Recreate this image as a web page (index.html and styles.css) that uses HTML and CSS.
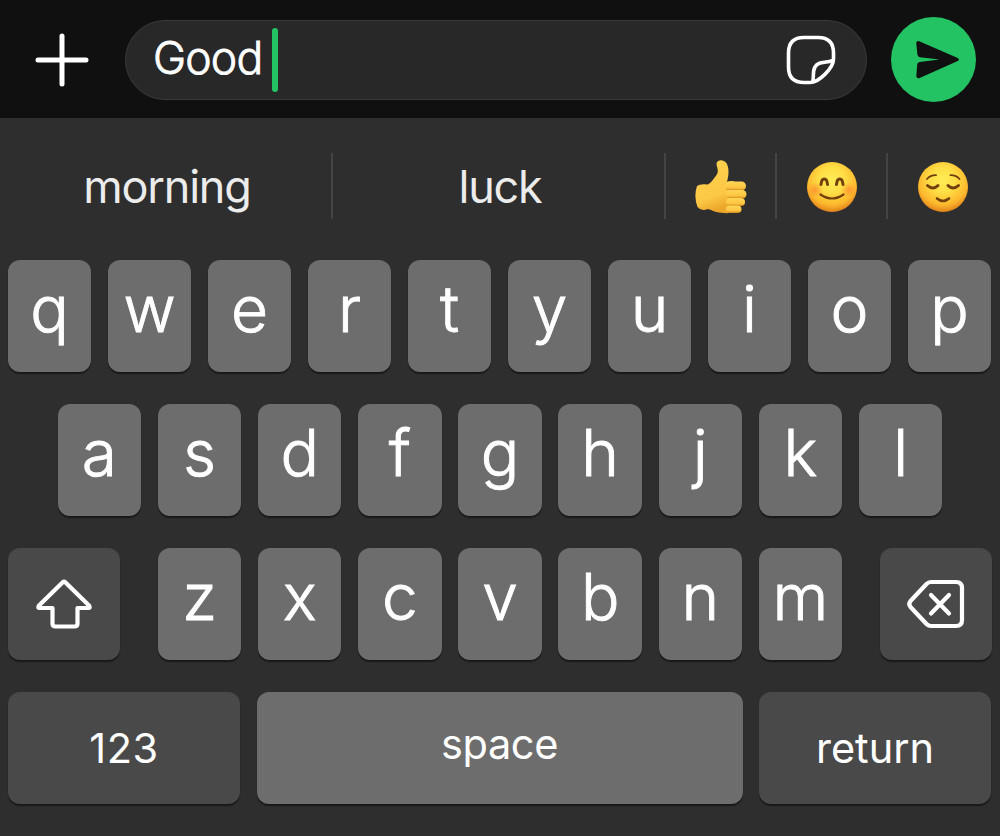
FILE: index.html
```html
<!DOCTYPE html>
<html lang="en">
<head>
<meta charset="utf-8">
<title>Message keyboard</title>
<link rel="stylesheet" href="styles.css">
</head>
<body>
<header class="composer">
  <svg class="plus" viewBox="0 0 54 54"><path d="M27 3v48M3 27h48"/></svg>
  <div class="field">
    <span class="typed">Good</span><span class="caret"></span>
    <svg class="sticker" viewBox="0 0 50 50"><path d="M18 2.500H32Q47.500 2.500 47.500 18V24C47.500 33 33 47.500 24 47.500H18Q2.500 47.500 2.500 32V18Q2.500 2.500 18 2.500ZM26.500 47C28.500 42 26 37 29 32C32 26 39 28.500 47 25.500"/></svg>
  </div>
  <div class="send"><svg viewBox="0 0 86 86"><path d="M25.500 26Q26 23.800 28.500 24.500L67 41.200Q70.500 43 67 44.800L29 61.700Q26 62.500 25.600 60L26.500 48Q26.700 45.700 29 45.500L49 43L29 40.700Q27 40.300 26.700 38Z"/></svg></div>
</header>
<main class="keyboard">
  <div class="suggestions">
    <div class="word">morning</div>
    <div class="word">luck</div>
    <div class="emoji">
      <svg viewBox="0 0 54 58">
        <defs>
          <linearGradient id="hand" x1="0" y1="0" x2="0.3" y2="1"><stop offset="0" stop-color="#ffd24e"/><stop offset=".75" stop-color="#fcc845"/><stop offset="1" stop-color="#eca62a"/></linearGradient>
          <linearGradient id="finger" x1="0" y1="0" x2="0" y2="1"><stop offset="0" stop-color="#ffd557"/><stop offset=".7" stop-color="#fcc540"/><stop offset="1" stop-color="#d0851a"/></linearGradient>
        </defs>
        <path fill="url(#hand)" d="M3 29Q6 26.500 14 27.500C18 25 20 21 22.500 18C25.500 14 22.500 10 22.500 6.500C23 2.500 30 1.500 33 7C35.500 13 34.500 19 33 25Q38 23 41 25L43 51Q40 57 30 56C22 56 18 53 14 52Q7 54.500 3.500 50Q-.5 39 3 29Z"/>
        <g fill="url(#finger)"><rect x="31" y="24.500" width="21" height="9" rx="4.500"/><rect x="32" y="33" width="20.500" height="8.500" rx="4.200"/><rect x="32" y="41" width="19" height="8" rx="4"/><rect x="32" y="48.500" width="15.500" height="7.500" rx="3.700"/></g>
      </svg>
    </div>
    <div class="emoji">
      <svg viewBox="0 0 54 58">
        <defs>
          <radialGradient id="face" cx=".5" cy=".36" r=".66"><stop offset="0" stop-color="#ffed55"/><stop offset=".4" stop-color="#ffdd45"/><stop offset=".75" stop-color="#fdb82d"/><stop offset="1" stop-color="#dd7a18"/></radialGradient>
          <radialGradient id="cheek"><stop offset="0" stop-color="#fb7c2c" stop-opacity=".65"/><stop offset="1" stop-color="#fa8a33" stop-opacity="0"/></radialGradient>
        </defs>
        <circle cx="27" cy="30" r="25" fill="url(#face)"/>
        <circle cx="10" cy="33" r="8" fill="url(#cheek)"/><circle cx="44" cy="33" r="8" fill="url(#cheek)"/>
        <g class="features"><path d="M16 27.500C16.500 20 22 20 22.500 27.500M31.500 27.500C32 20 37.500 20 38 27.500" stroke-width="3"/><path d="M15.500 37.500Q27 45.500 38.500 37.500" stroke-width="2.200"/></g>
      </svg>
    </div>
    <div class="emoji">
      <svg viewBox="0 0 54 58">
        <circle cx="27" cy="30" r="25" fill="url(#face)"/>
        <g class="features"><path d="M11.500 28.500Q17 33.500 22 28.500M32 28.500Q37 33.500 42.500 28.500" stroke-width="3"/><path d="M11 22Q14.500 18 20 18.200M34.500 18.200Q40 18 43.500 22" stroke-width="1.800"/><path d="M21 41.500Q27 46.500 33 41.500" stroke-width="2.600"/></g>
      </svg>
    </div>
  </div>
  <div class="row top">
    <div class="key">q</div><div class="key">w</div><div class="key">e</div><div class="key">r</div><div class="key">t</div><div class="key">y</div><div class="key">u</div><div class="key">i</div><div class="key">o</div><div class="key">p</div>
  </div>
  <div class="row">
    <div class="key">a</div><div class="key">s</div><div class="key">d</div><div class="key">f</div><div class="key">g</div><div class="key">h</div><div class="key">j</div><div class="key">k</div><div class="key">l</div>
  </div>
  <div class="row spread">
    <div class="key dark square"><svg viewBox="0 0 60 52"><path d="M28.500 4.500Q30 3 31.500 4.500L55 27.500Q57 30 54 30H43.500V45.500Q43.500 48.500 40.500 48.500H21.500Q18.500 48.500 18.500 45.500V30H6Q3 30 5 27.500Z"/></svg></div>
    <div class="letters">
      <div class="key">z</div><div class="key">x</div><div class="key">c</div><div class="key">v</div><div class="key">b</div><div class="key">n</div><div class="key">m</div>
    </div>
    <div class="key dark square"><svg viewBox="0 0 60 52"><path d="M25 4H50Q56 4 56 10V42Q56 48 50 48H25Q22.500 48 20.500 46L4.500 29Q2 26 4.500 23L20.500 6Q22.500 4 25 4ZM25 17L43 35.500M43 17L25 35.500"/></svg></div>
  </div>
  <div class="row spread bottom">
    <div class="key dark wide low digits">123</div>
    <div class="key space">space</div>
    <div class="key dark wide low">return</div>
  </div>
</main>
</body>
</html>
```
FILE: styles.css
```css
* { box-sizing: border-box; }
body {
  margin: 0;
  width: 1000px;
  height: 836px;
  overflow: hidden;
  background: #2e2e2e;
  color: #fff;
  font-family: Inter, "Liberation Sans", sans-serif;
}
svg { display: block; overflow: visible; }

.composer {
  display: flex;
  align-items: center;
  height: 118px;
  padding: 1px 24px 0 35px;
  background: #101010;
}
.plus { width: 54px; height: 54px; fill: none; stroke: #fff; stroke-width: 5; stroke-linecap: round; }
.field {
  display: flex;
  align-items: center;
  width: 742px;
  height: 80px;
  margin: 0 24px 0 36px;
  padding: 0 30px 0 26px;
  border: 1px solid #3a3a3a;
  border-radius: 40px;
  background: #282828;
}
.typed {
  width: 109px;
  padding: 0 0 3px 1px;
  font-size: 44.500px;
  font-weight: 300;
  line-height: 60px;
  letter-spacing: -0.8px;
  -webkit-text-stroke: 0.8px #fff;
}
.caret { width: 6px; height: 64px; margin-left: 11px; border-radius: 3px; background: #23c363; }
.sticker { width: 50px; height: 50px; margin-left: auto; fill: none; stroke: #fff; stroke-width: 3.6; stroke-linejoin: round; }
.send { width: 85px; height: 85px; flex: none; border-radius: 50%; background: #23c363; }
.send svg { width: 85px; height: 85px; fill: #101010; }

.keyboard { display: flex; flex-direction: column; gap: 32px; }
.suggestions {
  display: grid;
  grid-template-columns: 333px 333px 111px 111px 112px;
  height: 66px;
  margin: 35px 0 9px;
}
.suggestions > div { display: flex; align-items: center; justify-content: center; border-right: 2px solid #444; }
.suggestions > div:last-child { border-right-color: transparent; }
.word { padding-left: 3px; font-size: 45px; font-weight: 400; letter-spacing: -1.2px; color: #ececec; }
.emoji svg { width: 54px; height: 58px; }
.features { fill: none; stroke: #71400c; stroke-linecap: round; }

.row { display: flex; justify-content: center; gap: 16.67px; height: 112px; }
.top { gap: 16.5px; padding-right: 1px; }
.spread { justify-content: space-between; gap: 0; padding: 0 8px; }
.bottom { padding-right: 9px; }
.letters { display: flex; gap: 16.67px; }
.key {
  width: 83.500px;
  height: 112px;
  flex: none;
  border-radius: 12px;
  background: #6d6d6d;
  box-shadow: 0 2px 1px #191919;
  text-align: center;
  font-size: 64px;
  font-weight: 300;
  line-height: 97px;
  -webkit-text-stroke: 0.9px #fff;
}
.dark { background: #494949; }
.square { display: flex; align-items: center; justify-content: center; width: 112px; }
.square svg { width: 60px; height: 52px; fill: none; stroke: #fff; stroke-width: 4.2; stroke-linecap: round; stroke-linejoin: round; }
.wide { width: 232px; }
.space { width: 486px; }
.space, .wide { font-size: 41.500px; font-weight: 400; line-height: 104px; -webkit-text-stroke: 0; }
.space { letter-spacing: -0.4px; }
.low { line-height: 112px; }
.digits { letter-spacing: 0.6px; }
```
